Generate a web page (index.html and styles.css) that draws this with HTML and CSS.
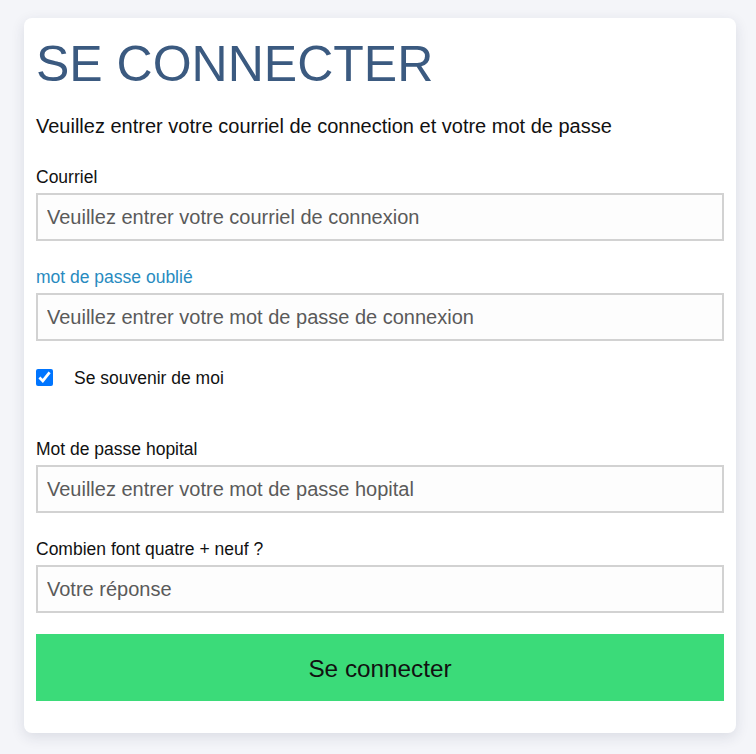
FILE: index.html
```html
<!DOCTYPE html>
<html lang="fr">
<head>
<meta charset="utf-8">
<title>Se connecter</title>
<link rel="stylesheet" href="styles.css">
</head>
<body>
<main class="card">
  <h1 class="title">SE CONNECTER</h1>
  <p class="intro">Veuillez entrer votre courriel de connection et votre mot de passe</p>
  <form class="form">
    <div class="group">
      <label class="label" for="email">Courriel</label>
      <input class="input" id="email" type="email" placeholder="Veuillez entrer votre courriel de connexion">
    </div>
    <div class="group">
      <a class="label link" href="#">mot de passe oublié</a>
      <input class="input" id="pwd" type="password" placeholder="Veuillez entrer votre mot de passe de connexion">
    </div>
    <div class="remember">
      <input class="check" id="remember" type="checkbox" checked>
      <label class="check-label" for="remember">Se souvenir de moi</label>
    </div>
    <div class="group">
      <label class="label" for="hpwd">Mot de passe hopital</label>
      <input class="input" id="hpwd" type="password" placeholder="Veuillez entrer votre mot de passe hopital">
    </div>
    <div class="group">
      <label class="label" for="captcha">Combien font quatre + neuf ?</label>
      <input class="input" id="captcha" type="text" placeholder="Votre réponse">
    </div>
    <button class="submit" type="button">Se connecter</button>
  </form>
</main>
</body>
</html>
```
FILE: styles.css
```css
* { box-sizing: border-box; }

html, body {
  margin: 0;
  background: #f4f5f9;
  font-family: "Liberation Sans", Arial, sans-serif;
  color: #111;
}

body {
  padding: 18px 0 0 24px;
  height: 754px;
}

.card {
  width: 712px;
  background: #fff;
  border-radius: 8px;
  box-shadow: 0 4px 14px rgba(30, 40, 70, 0.12);
  padding: 12px 12px 32px;
}

.title {
  margin: 6px 0 0;
  font-size: 50px;
  font-weight: 400;
  line-height: 1.15;
  color: #3b5a80;
}

.intro {
  margin: 21px 0 0;
  font-size: 20px;
  line-height: 23px;
  color: #111;
}

.form {
  display: flex;
  flex-direction: column;
  margin-top: 30px;
}

.group {
  display: flex;
  flex-direction: column;
  margin-bottom: 27px;
}

.label {
  display: block;
  font-size: 17.5px;
  line-height: 19px;
  margin-bottom: 6px;
  color: #111;
}

.link {
  color: #288bbf;
  text-decoration: none;
}

.input {
  height: 48px;
  width: 100%;
  border: 2px solid #d2d2d2;
  background: #fdfdfd;
  padding: 2px 9px 0;
  font-family: "Liberation Sans", Arial, sans-serif;
  font-size: 20px;
  color: #333;
  outline: none;
}

.input::placeholder {
  color: #5a5a5a;
  opacity: 1;
}

.group:nth-child(2) {
  margin-bottom: 0;
}

.remember {
  display: flex;
  align-items: center;
  height: 17px;
  margin: 28px 0 54px;
}

.check {
  width: 17px;
  height: 17px;
  margin: 0;
}

.check-label {
  margin-left: 21px;
  padding-top: 1px;
  font-size: 17.5px;
  line-height: 20px;
  color: #111;
}

.group:nth-child(5) {
  margin-bottom: 21px;
}

.submit {
  height: 67px;
  width: 100%;
  border: none;
  background: #3bdb79;
  color: #111;
  padding: 3px 0 0;
  font-family: "Liberation Sans", Arial, sans-serif;
  font-size: 24.3px;
  cursor: pointer;
}
```
